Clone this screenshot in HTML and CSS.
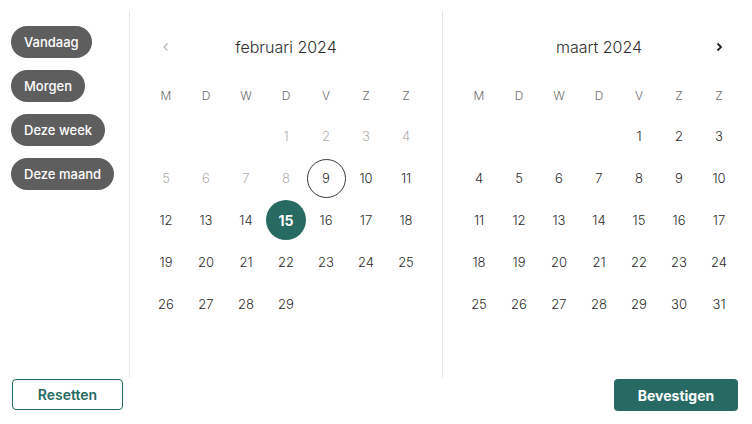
FILE: index.html
```html
<!DOCTYPE html>
<html lang="nl">
<head>
<meta charset="utf-8">
<title>Datumkiezer</title>
<link rel="stylesheet" href="styles.css">
</head>
<body>
<div class="picker">
  <div class="main">
    <aside class="presets">
      <button class="pill">Vandaag</button>
      <button class="pill">Morgen</button>
      <button class="pill">Deze week</button>
      <button class="pill">Deze maand</button>
    </aside>
    <section class="month month-feb">
      <div class="head">
        <span class="nav nav-prev"><svg width="10" height="10" viewBox="0 0 10 10"><path d="M6.5 1.5 L3 5 L6.5 8.5" fill="none" stroke="#b0b0b0" stroke-width="1.1"/></svg></span>
        <span class="title">februari 2024</span>
        <span class="nav"></span>
      </div>
      <div class="grid wd"><span>M</span><span>D</span><span>W</span><span>D</span><span>V</span><span>Z</span><span>Z</span></div>
      <div class="grid days">
        <span></span><span></span><span></span>
        <span class="off">1</span><span class="off">2</span><span class="off">3</span><span class="off">4</span>
        <span class="off">5</span><span class="off">6</span><span class="off">7</span><span class="off">8</span>
        <span><b class="today">9</b></span><span>10</span><span>11</span>
        <span>12</span><span>13</span><span>14</span><span><b class="sel">15</b></span><span>16</span><span>17</span><span>18</span>
        <span>19</span><span>20</span><span>21</span><span>22</span><span>23</span><span>24</span><span>25</span>
        <span>26</span><span>27</span><span>28</span><span>29</span>
      </div>
    </section>
    <section class="month month-mar">
      <div class="head">
        <span class="nav"></span>
        <span class="title">maart 2024</span>
        <span class="nav nav-next"><svg width="10" height="10" viewBox="0 0 10 10"><path d="M3.5 1.5 L7 5 L3.5 8.5" fill="none" stroke="#1e1e1e" stroke-width="1.8"/></svg></span>
      </div>
      <div class="grid wd"><span>M</span><span>D</span><span>W</span><span>D</span><span>V</span><span>Z</span><span>Z</span></div>
      <div class="grid days">
        <span></span><span></span><span></span><span></span>
        <span>1</span><span>2</span><span>3</span>
        <span>4</span><span>5</span><span>6</span><span>7</span><span>8</span><span>9</span><span>10</span>
        <span>11</span><span>12</span><span>13</span><span>14</span><span>15</span><span>16</span><span>17</span>
        <span>18</span><span>19</span><span>20</span><span>21</span><span>22</span><span>23</span><span>24</span>
        <span>25</span><span>26</span><span>27</span><span>28</span><span>29</span><span>30</span><span>31</span>
      </div>
    </section>
  </div>
  <div class="footer">
    <button class="btn btn-reset">Resetten</button>
    <button class="btn btn-ok">Bevestigen</button>
  </div>
</div>
</body>
</html>
```
FILE: styles.css
```css
* { box-sizing: border-box; }
body {
  margin: 0;
  background: #fff;
  font-family: Inter, "Noto Sans", sans-serif;
  color: #333;
}
.picker {
  width: 752px;
  height: 424px;
  padding-top: 11px;
}
.main {
  display: flex;
  height: 367px;
}
.presets {
  width: 130px;
  border-right: 1px solid #e6e6e6;
  padding: 15px 0 0 11px;
  display: flex;
  flex-direction: column;
  align-items: flex-start;
  gap: 12px;
}
.pill {
  height: 32px;
  padding: 0 13px;
  border: 0;
  border-radius: 16px;
  background: #5e5e5e;
  color: #fff;
  font-family: Inter, sans-serif;
  font-size: 13px;
  font-weight: 500;
}
.month {
  padding: 16px 16px 0 16px;
}
.month-feb {
  width: 313px;
  border-right: 1px solid #e6e6e6;
}
.month-mar {
  width: 309px;
  padding-right: 13px;
}
.head {
  height: 40px;
  display: flex;
  align-items: center;
  justify-content: space-between;
}
.nav {
  width: 40px;
  height: 40px;
  display: flex;
  align-items: center;
  justify-content: center;
}
.title {
  font-size: 16px;
  font-weight: 300;
  color: #2e2e2e;
}
.grid {
  display: grid;
  grid-template-columns: repeat(7, 40px);
}
.wd {
  margin-top: 8px;
  height: 40px;
}
.wd span {
  display: flex;
  align-items: center;
  justify-content: center;
  font-size: 12px;
  font-weight: 300;
  color: #6e6e6e;
}
.days {
  grid-auto-rows: 42px;
}
.days span {
  display: flex;
  align-items: center;
  justify-content: center;
  font-size: 13px;
  font-weight: 300;
  color: #2a2a2a;
}
.days span.off { color: #b0b0b0; }
.days b {
  width: 40px;
  height: 40px;
  border-radius: 50%;
  display: flex;
  align-items: center;
  justify-content: center;
  font-weight: 300;
}
.days b.today {
  width: 39px;
  height: 39px;
  border: 1px solid #3a3a3a;
}
.days b.sel {
  background: #266a62;
  color: #fff;
  font-weight: 700;
  font-size: 14px;
}
.footer {
  display: flex;
  justify-content: space-between;
  align-items: flex-start;
  padding: 1px 14px 0 12px;
}
.btn {
  font-family: Inter, sans-serif;
  font-size: 14px;
  font-weight: 700;
  border-radius: 4px;
}
.btn-reset {
  width: 111px;
  height: 31px;
  background: #fff;
  color: #266a62;
  border: 1px solid #266a62;
  font-weight: 600;
}
.btn-ok {
  width: 124px;
  height: 32px;
  background: #276a63;
  color: #fff;
  border: 0;
}
```
